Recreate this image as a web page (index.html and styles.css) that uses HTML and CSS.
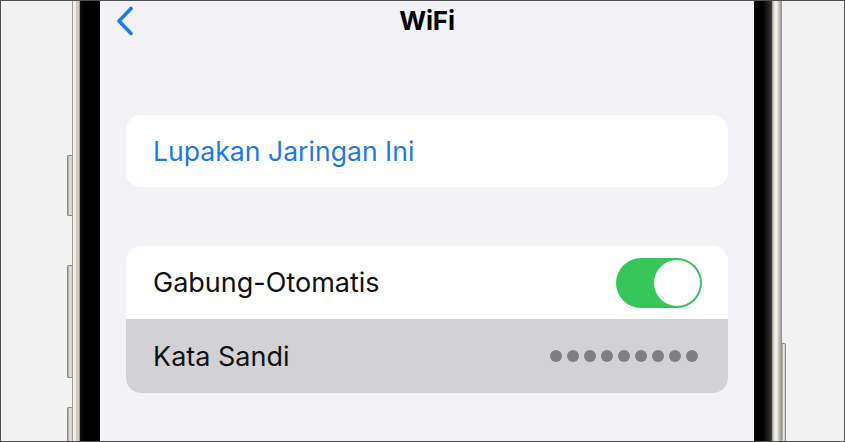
FILE: index.html
```html
<!DOCTYPE html>
<html lang="id">
<head>
<meta charset="utf-8">
<title>WiFi</title>
<link rel="stylesheet" href="styles.css">
</head>
<body>
<div class="viewport">
  <div class="phone">
    <span class="side-btn left b1"></span>
    <span class="side-btn left b2"></span>
    <span class="side-btn left b3"></span>
    <span class="side-btn right b4"></span>

    <div class="rail rail-left"></div>
    <div class="bezel bezel-left"></div>

    <div class="screen">
      <header class="nav">
        <svg class="back" width="18" height="30" viewBox="0 0 18 30" aria-hidden="true">
          <path d="M15 2.5 L3 15 L15 27.5" fill="none" stroke="#1b7cee" stroke-width="3.6" stroke-linecap="round" stroke-linejoin="round"/>
        </svg>
        <h1 class="title">WiFi</h1>
        <span></span>
      </header>

      <section class="group first">
        <div class="row link">Lupakan Jaringan Ini</div>
      </section>

      <section class="group second">
        <div class="row">
          <span>Gabung-Otomatis</span>
          <span class="toggle on"><span class="knob"></span></span>
        </div>
        <div class="row pressed">
          <span>Kata Sandi</span>
          <span class="dots">
            <i></i><i></i><i></i><i></i><i></i><i></i><i></i><i></i><i></i>
          </span>
        </div>
      </section>
    </div>

    <div class="bezel bezel-right"></div>
    <div class="rail rail-right"></div>
  </div>
</div>
</body>
</html>
```

FILE: styles.css
```css
* { box-sizing: border-box; }

html, body {
  margin: 0;
  padding: 0;
  width: 845px;
  height: 442px;
  overflow: hidden;
  background: #f2f2f2;
}

body {
  font-family: "Inter", "Liberation Sans", sans-serif;
}

.viewport {
  width: 845px;
  height: 442px;
  border: 1px solid #505050;
  background: #f2f2f2;
  overflow: hidden;
  display: flex;
}

/* phone body: titanium rails, black bezel, screen */
.phone {
  position: relative;
  flex: none;
  margin-left: 71px;
  height: 100%;
  display: flex;
}

.rail { flex: none; height: 100%; }
.rail-left {
  width: 8px;
  background: linear-gradient(to right, #a19d96 0 1px, #efede8 1px 4px, #cdc9c1 4px 7px, #9e9a93 7px 8px);
}
.rail-right {
  width: 10px;
  background: linear-gradient(to right, #8c8984 0, #c4c1ba 1px, #eeece7 3px, #f1efea 5px, #c6c2bb 7px, #a29e97 9px, #8a8781 10px);
}

.bezel { flex: none; height: 100%; background: #000; }
.bezel-left {
  width: 20px;
  background: linear-gradient(to right, #111 0, #000 4px, #000 100%);
}
.bezel-right {
  width: 18px;
  background: linear-gradient(to right, #000 0, #000 9px, #1c1c1c 14px, #3c3c3c 18px);
}

.side-btn {
  position: absolute;
  width: 5px;
  left: -5px;
  background: linear-gradient(to right, #a09d97, #e8e6e1 45%, #cfccc5);
  border: 1px solid #8d8a84;
  border-right: none;
  border-radius: 2px 0 0 2px;
}
.side-btn.right {
  left: auto;
  right: -4px;
  width: 4px;
  border-right: 1px solid #8d8a84;
  border-left: none;
  border-radius: 0 2px 2px 0;
}
.b1 { top: 154px; height: 61px; }
.b2 { top: 264px; height: 113px; }
.b3 { top: 406px; height: 60px; }
.b4 { top: 342px; height: 120px; }

.screen {
  flex: none;
  width: 654px;
  height: 100%;
  background: #f2f2f7;
  padding: 0 26px;
}

.nav {
  display: grid;
  grid-template-columns: 1fr auto 1fr;
  align-items: center;
  height: 38px;
  margin: 0 -10px;
}
.back { display: block; margin-top: 2px; }
.title {
  margin: 0;
  font-size: 26px;
  font-weight: 700;
  color: #000;
  letter-spacing: -0.2px;
}

.group {
  background: #fff;
  border-radius: 15px;
  overflow: hidden;
}
.group.first { margin-top: 76px; }
.group.second { margin-top: 59px; }

.row {
  display: flex;
  align-items: center;
  justify-content: space-between;
  height: 73px;
  padding: 0 26px 0 27px;
  font-size: 27px;
  color: #111;
}
.row.link { height: 72px; color: #1d79e6; font-size: 26.6px; }
.row.pressed {
  height: 74px;
  background: #d1d1d6;
  padding-right: 30px;
}

.toggle {
  position: relative;
  width: 86px;
  height: 50px;
  border-radius: 25px;
  background: #36c659;
}
.knob {
  position: absolute;
  top: 2px;
  right: 2px;
  width: 46px;
  height: 46px;
  border-radius: 50%;
  background: #fff;
}

.dots {
  display: flex;
  gap: 5px;
}
.dots i {
  width: 12px;
  height: 12px;
  border-radius: 50%;
  background: #7e7e83;
}
```
